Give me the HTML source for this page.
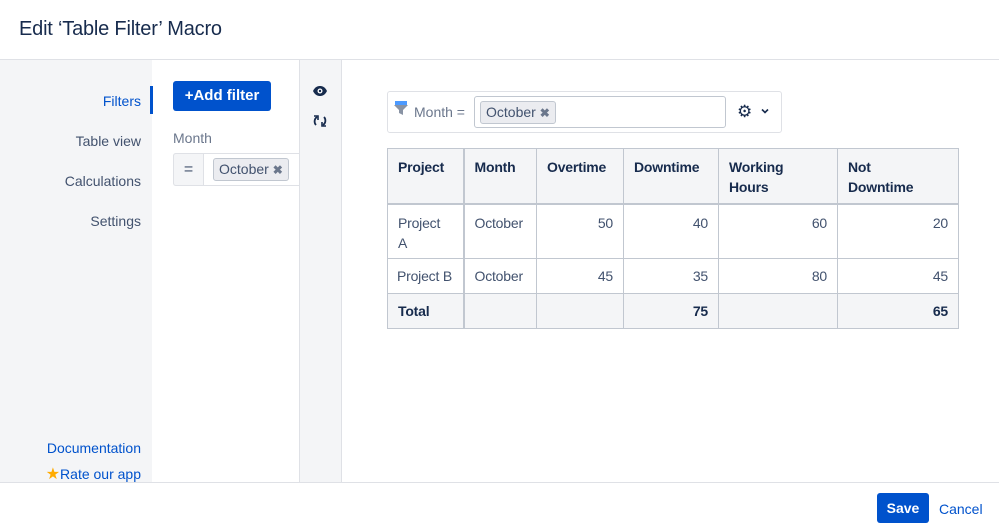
<!DOCTYPE html>
<html><head><style>
*{box-sizing:border-box;margin:0;padding:0}
body{width:999px;height:530px;position:relative;font-family:"Liberation Sans",sans-serif;background:#fff;color:#172b4d;overflow:hidden}
.a{position:absolute}
table{border-collapse:collapse;font-size:14px;table-layout:fixed;letter-spacing:-0.2px}
td,th{border:1px solid #c1c7d0;vertical-align:top;padding:8px 10px 0;text-align:left;line-height:20px;white-space:nowrap}
th{background:#f4f5f7;font-weight:bold;color:#172b4d}
td{color:#42526e}
.r{text-align:right}
tr.h th{border-bottom:2px solid #c1c7d0}
td:first-child,th:first-child{border-right:2px solid #c1c7d0}
tr.t td{background:#f4f5f7;font-weight:bold;color:#172b4d}
tr.s td{padding-top:7px}
.tag{background:#ebecf0;border:1px solid #c1c7d0;border-radius:3px;color:#42526e;font-size:14px;padding:1px 5px;display:inline-block;line-height:18px}
</style></head><body>
<div class="a" style="left:19px;top:18px;font-size:20px;color:#172b4d;letter-spacing:-0.2px">Edit ‘Table Filter’ Macro</div>
<div class="a" style="left:0;top:59px;width:999px;height:1px;background:#dfe1e6"></div>
<div class="a" style="left:0;top:60px;width:152px;height:423px;background:#f4f5f7"></div>
<div class="a" style="left:150px;top:86px;width:3px;height:28px;background:#0052cc"></div>
<div class="a" style="left:0;top:93px;width:141px;text-align:right;font-size:14px;color:#0052cc">Filters</div>
<div class="a" style="left:0;top:133px;width:141px;text-align:right;font-size:14px;color:#42526e">Table view</div>
<div class="a" style="left:0;top:173px;width:141px;text-align:right;font-size:14px;color:#42526e">Calculations</div>
<div class="a" style="left:0;top:213px;width:141px;text-align:right;font-size:14px;color:#42526e">Settings</div>
<div class="a" style="left:0;top:440px;width:141px;text-align:right;font-size:14px;color:#0052cc">Documentation</div>
<div class="a" style="left:0;top:464px;width:141px;text-align:right;font-size:14px;color:#0052cc"><span style="color:#ffab00;font-size:16px">★</span>Rate our app</div>
<div class="a" style="left:173px;top:81px;width:98px;height:30px;background:#0052cc;border-radius:3px;color:#fff;font-weight:bold;font-size:15px;line-height:30px;text-align:center">+Add filter</div>
<div class="a" style="left:173px;top:130px;font-size:14px;color:#6b778c">Month</div>
<div class="a" style="left:173px;top:153px;width:127px;height:33px;border:1px solid #dfe1e6;border-right:none;border-radius:3px 0 0 3px;background:#fff"></div>
<div class="a" style="left:173px;top:153px;width:31px;height:33px;background:#f4f5f7;border:1px solid #dfe1e6;border-radius:3px 0 0 3px;text-align:center;line-height:31px;font-size:16px;color:#42526e">=</div>
<div class="a" style="left:213px;top:158px"><span class="tag">October <b style="color:#6b778c;font-size:12px">✖</b></span></div>
<div class="a" style="left:299px;top:60px;width:43px;height:423px;background:#f4f5f7;border-left:1px solid #dfe1e6;border-right:1px solid #dfe1e6"></div>
<div class="a" style="left:312px;top:84px"><svg width="16" height="14" viewBox="0 0 16 14"><path d="M1 7C3 3 5.5 2 8 2s5 1 7 5c-2 4-4.5 5-7 5S3 11 1 7z" fill="#172b4d"/><circle cx="8" cy="7" r="2.5" fill="#fff"/><circle cx="8" cy="7" r="1.2" fill="#172b4d"/></svg></div>
<div class="a" style="left:312px;top:113px"><svg width="16" height="16" viewBox="0 0 16 16" fill="none" stroke="#172b4d" stroke-width="1.8"><path d="M4 12C2 10 2 6 5 4M12 4c2 2 2 6-1 8"/><path d="M2 3h4v4M14 13h-4V9" stroke-width="1.6"/></svg></div>
<div class="a" style="left:387px;top:91px;width:395px;height:42px;border:1px solid #dfe1e6;border-radius:3px"></div>
<div class="a" style="left:393px;top:100px"><svg width="16" height="16" viewBox="0 0 16 16"><rect x="2" y="1" width="12" height="4" fill="#4c9aff"/><path d="M1 5h14l-5 5v5l-4-2v-3z" fill="#8993a4"/></svg></div>
<div class="a" style="left:414px;top:104px;font-size:14px;color:#6b778c">Month =</div>
<div class="a" style="left:474px;top:96px;width:252px;height:32px;border:1px solid #c1c7d0;border-radius:3px"></div>
<div class="a" style="left:480px;top:101px"><span class="tag">October <b style="color:#6b778c;font-size:12px">✖</b></span></div>
<div class="a" style="left:737px;top:102px;font-size:17px;color:#172b4d">⚙</div>
<div class="a" style="left:760px;top:103px"><svg width="10" height="10" viewBox="0 0 10 10"><path d="M2 3.5l3 3 3-3" stroke="#172b4d" stroke-width="1.6" fill="none"/></svg></div>
<table class="a" style="left:387px;top:148px;width:571px">
<colgroup><col style="width:76px"><col style="width:73px"><col style="width:87px"><col style="width:95px"><col style="width:119px"><col style="width:121px"></colgroup>
<tr class="h" style="height:55px"><th>Project</th><th>Month</th><th>Overtime</th><th>Downtime</th><th>Working<br>Hours</th><th>Not<br>Downtime</th></tr>
<tr style="height:55px"><td>Project<br>A</td><td>October</td><td class="r">50</td><td class="r">40</td><td class="r">60</td><td class="r">20</td></tr>
<tr class="s" style="height:35px"><td style="padding-left:9px;padding-right:4px">Project B</td><td>October</td><td class="r">45</td><td class="r">35</td><td class="r">80</td><td class="r">45</td></tr>
<tr class="t s" style="height:35px"><td>Total</td><td></td><td></td><td class="r">75</td><td></td><td class="r">65</td></tr>
</table>
<div class="a" style="left:0;top:482px;width:999px;height:1px;background:#dfe1e6"></div>
<div class="a" style="left:877px;top:493px;width:52px;height:30px;background:#0052cc;border-radius:3px;color:#fff;font-weight:bold;font-size:14px;line-height:30px;text-align:center">Save</div>
<div class="a" style="left:939px;top:501px;font-size:14px;color:#0052cc">Cancel</div>
</body></html>
